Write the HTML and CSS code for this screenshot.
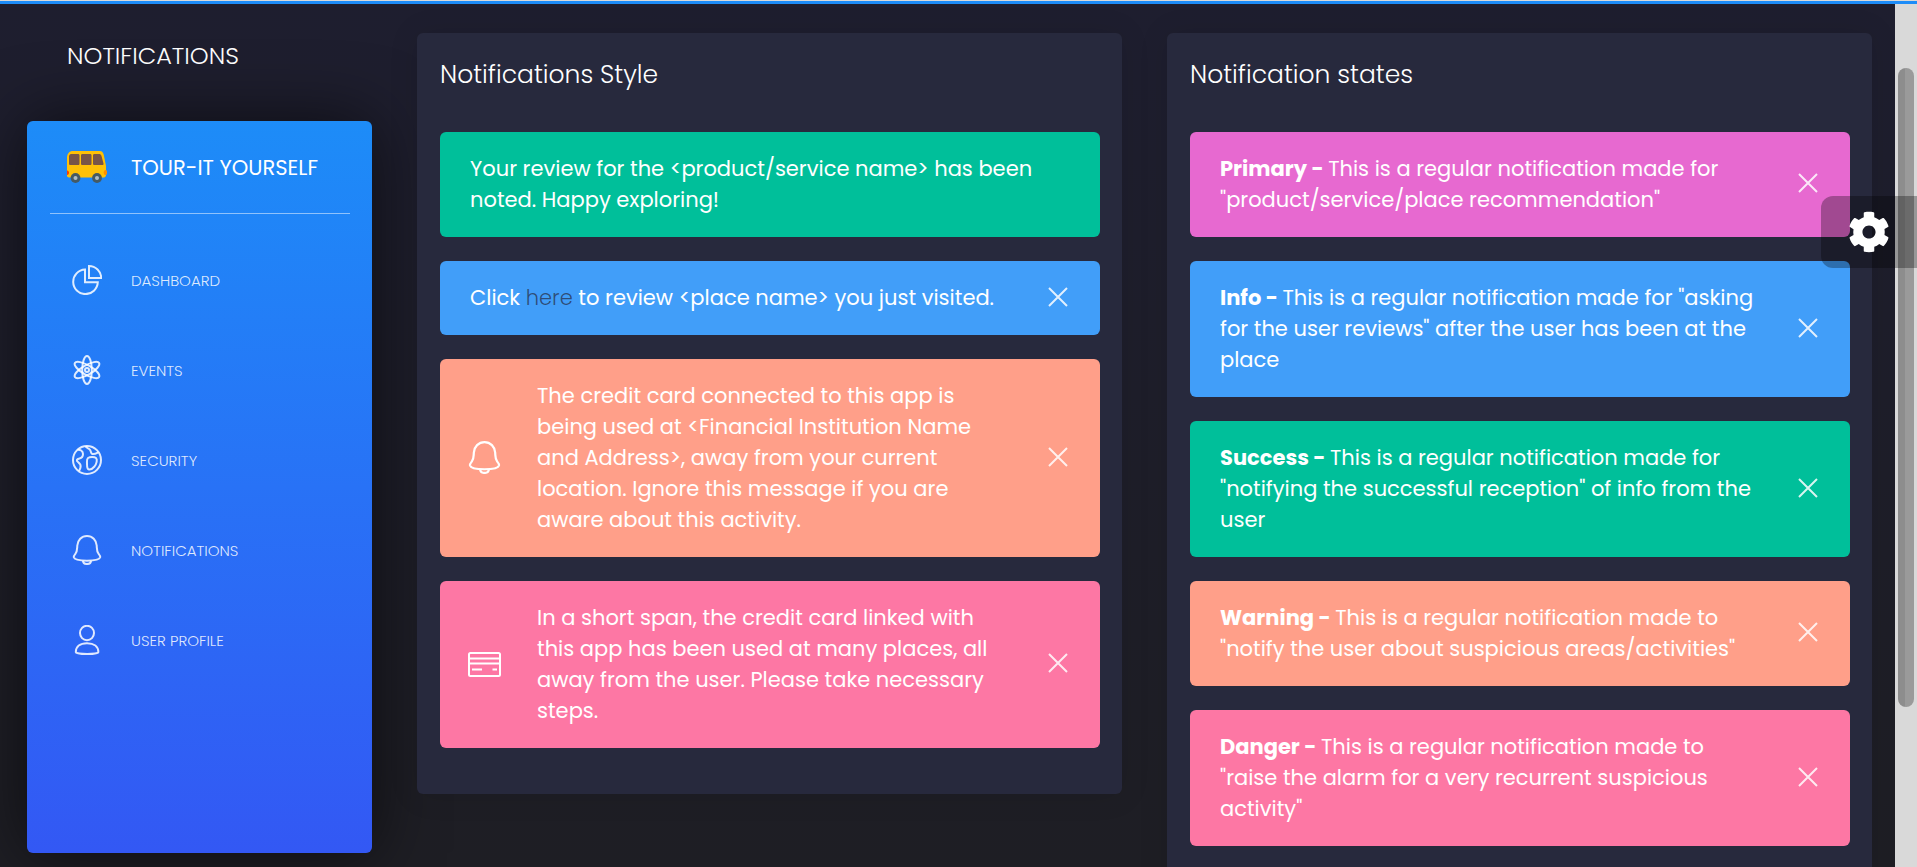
FILE: index.html
```html
<!DOCTYPE html>
<html lang="en">
<head>
<meta charset="utf-8">
<title>Tour-it Yourself - Notifications</title>
<link rel="stylesheet" href="styles.css">
</head>
<body>
<svg class="sprite" aria-hidden="true">
  <symbol id="bell" viewBox="0 0 30 30">
    <path d="M15 1C9.500 1 5.700 5.200 5.300 10.500C5 15 5.300 16.500 3.500 18.600C2.200 20.200 1.500 21 1.800 22.300C2.400 24.400 8 25.700 15 25.700S27.600 24.400 28.200 22.300C28.500 21 27.800 20.200 26.500 18.600C24.700 16.500 25 15 24.700 10.500C24.300 5.200 20.500 1 15 1Z"/>
    <path d="M11 25.800c.4 4.300 7.600 4.300 8 0"/>
  </symbol>
  <symbol id="cross" viewBox="0 0 20 20"><path d="M1 1l18 18M19 1l-18 18"/></symbol>
</svg>
<div class="topline"></div>
<div class="app">
  <div class="left">
    <h1 class="page-title">NOTIFICATIONS</h1>
    <nav class="sidebar" aria-label="Main">
      <a class="brand" href="#">
        <svg class="bus" viewBox="0 0 40 32" aria-hidden="true">
          <path fill="#ffc107" d="M5 0h28c2 0 3 1.500 3.800 4L39 15v9c0 1.500-1 2.500-2 2.500H2C.8 26.500 0 25.500 0 24.500V6C0 4 2 0 5 0z"/>
          <path fill="#795548" d="M4 3h7c1 0 1.500.5 1.500 1.500v8c0 1-.5 1.500-1.500 1.500H3.500c-1 0-1.500-.5-1.500-1.500V5.500C2 4 3 3 4 3zM15.500 3h7.500c1 0 1.500.5 1.500 1.500v8c0 1-.5 1.500-1.500 1.500h-7.500c-1 0-1.500-.5-1.500-1.500v-8c0-1 .5-1.500 1.500-1.500zM27.500 3H32c1.200 0 2 .6 2.500 2l2 7.500c.2 1-.3 1.500-1.500 1.500h-7.500c-1 0-1.500-.5-1.500-1.500v-8c0-1 .5-1.500 1.500-1.500z"/>
          <path fill="#ff3d00" d="M0 19.500c2.700 0 2.700 4.500 0 4.500z"/>
          <ellipse fill="#ff8f00" cx="38.500" cy="21.500" rx="1.800" ry="2.500"/>
          <circle fill="#455a64" cx="8.500" cy="27" r="4.900"/><circle fill="#b0bec5" cx="8.500" cy="27" r="2"/>
          <circle fill="#455a64" cx="30" cy="27" r="4.900"/><circle fill="#b0bec5" cx="30" cy="27" r="2"/>
        </svg>
        <span>TOUR-IT YOURSELF</span>
      </a>
      <ul class="menu">
        <li><a href="#">
          <svg viewBox="0 0 30 30" aria-hidden="true"><path d="M13 4.500A12.300 12.300 0 1 0 25.800 17.300H13z"/><path d="M17 1v12h12.200A12.200 12.200 0 0 0 17 1z"/></svg>
          <span>DASHBOARD</span></a></li>
        <li><a href="#">
          <svg viewBox="0 0 30 30" aria-hidden="true"><ellipse cx="15" cy="15" rx="4.800" ry="14"/><ellipse cx="15" cy="15" rx="4.800" ry="14" transform="rotate(60 15 15)"/><ellipse cx="15" cy="15" rx="4.800" ry="14" transform="rotate(120 15 15)"/><circle cx="15" cy="15" r="2"/></svg>
          <span>EVENTS</span></a></li>
        <li><a href="#">
          <svg viewBox="0 0 30 30" aria-hidden="true"><circle cx="15" cy="15" r="14"/><path d="M5.500 4.800C8 4.200 11 6 11 9c0 2.500-1 4-3.500 4.500-3 .7-3.500 2-1.500 3.500 2.200 1.600 3.200 3 2.500 5.500-.4 1.400-1 2.500-1.500 3.700"/><path d="M13.500 1.300c1 1.500 3 2.200 4.200 3.200 1.300 1 .8 3 2.300 4.300 1.200.8 3 .2 6.300-1.500"/><path d="M16 13c2-1.300 6.500-1.200 8 0 1.700 1.500.5 6-1.500 8.500-1.700 2-3.700 3.200-5.500 3-2-.3-2-2.700-2-5.500S14.500 14.200 16 13z"/></svg>
          <span>SECURITY</span></a></li>
        <li><a href="#">
          <svg aria-hidden="true"><use href="#bell"/></svg>
          <span>NOTIFICATIONS</span></a></li>
        <li><a href="#">
          <svg viewBox="0 0 30 30" aria-hidden="true"><ellipse cx="15" cy="8" rx="7" ry="7.200"/><path d="M15 18.200c-7 0-11.200 3.300-11.200 9 0 2.400 22.600 2.400 22.600 0 0-5.700-4.400-9-11.400-9z"/></svg>
          <span>USER PROFILE</span></a></li>
      </ul>
    </nav>
  </div>
  <main class="cards">
    <section class="card">
      <h2>Notifications Style</h2>
      <div class="alert success"><p>Your review for the &lt;product/service name&gt; has been<br>noted. Happy exploring!</p></div>
      <div class="alert info"><p>Click <a href="#">here</a> to review &lt;place name&gt; you just visited.</p>
        <button type="button" class="close" aria-label="Close"><svg><use href="#cross"/></svg></button></div>
      <div class="alert with-icon warning"><svg class="icon" aria-hidden="true"><use href="#bell"/></svg>
        <p>The credit card connected to this app is<br>being used at &lt;Financial Institution Name<br>and Address&gt;, away from your current<br>location. Ignore this message if you are<br>aware about this activity.</p>
        <button type="button" class="close" aria-label="Close"><svg><use href="#cross"/></svg></button></div>
      <div class="alert with-icon danger"><svg class="icon" viewBox="0 0 33 33" aria-hidden="true"><rect x="1" y="5" width="31" height="23" rx="1.500"/><path d="M1 10.500h31M1 15.500h31M4 21.500h10M24.500 21.500h4.500"/></svg>
        <p>In a short span, the credit card linked with<br>this app has been used at many places, all<br>away from the user. Please take necessary<br>steps.</p>
        <button type="button" class="close" aria-label="Close"><svg><use href="#cross"/></svg></button></div>
    </section>
    <section class="card">
      <h2>Notification states</h2>
      <div class="alert primary"><p><b>Primary - </b>This is a regular notification made for<br>"product/service/place recommendation"</p>
        <button type="button" class="close" aria-label="Close"><svg><use href="#cross"/></svg></button></div>
      <div class="alert info"><p><b>Info - </b>This is a regular notification made for "asking<br>for the user reviews" after the user has been at the<br>place</p>
        <button type="button" class="close" aria-label="Close"><svg><use href="#cross"/></svg></button></div>
      <div class="alert success"><p><b>Success - </b>This is a regular notification made for<br>"notifying the successful reception" of info from the<br>user</p>
        <button type="button" class="close" aria-label="Close"><svg><use href="#cross"/></svg></button></div>
      <div class="alert warning"><p><b>Warning - </b>This is a regular notification made to<br>"notify the user about suspicious areas/activities"</p>
        <button type="button" class="close" aria-label="Close"><svg><use href="#cross"/></svg></button></div>
      <div class="alert danger"><p><b>Danger - </b>This is a regular notification made to<br>"raise the alarm for a very recurrent suspicious<br>activity"</p>
        <button type="button" class="close" aria-label="Close"><svg><use href="#cross"/></svg></button></div>
    </section>
  </main>
  <div class="scroll-track"><div class="scroll-thumb"></div></div>
</div>
<button type="button" class="settings" aria-label="Settings">
  <svg viewBox="0 0 512 512"><path d="M487.400 315.700l-42.600-24.600c4.300-23.200 4.300-47 0-70.200l42.600-24.600c4.900-2.800 7.100-8.600 5.500-14-11.100-35.600-30-67.800-54.700-94.600-3.800-4.100-10-5.100-14.800-2.300L380.800 110c-17.900-15.400-38.500-27.300-60.800-35.100V25.800c0-5.600-3.900-10.500-9.400-11.700-36.700-8.200-74.300-7.800-109.200 0-5.500 1.200-9.400 6.100-9.400 11.700V75c-22.200 7.900-42.800 19.800-60.800 35.100L88.700 85.500c-4.900-2.800-11-1.900-14.800 2.300-24.700 26.700-43.600 58.900-54.700 94.600-1.700 5.400.6 11.200 5.500 14L67.300 221c-4.300 23.200-4.300 47 0 70.200l-42.600 24.600c-4.900 2.800-7.100 8.600-5.500 14 11.100 35.600 30 67.800 54.700 94.600 3.800 4.100 10 5.100 14.800 2.300l42.600-24.600c17.900 15.400 38.500 27.300 60.800 35.100v49.200c0 5.600 3.900 10.500 9.400 11.700 36.700 8.200 74.300 7.800 109.200 0 5.500-1.200 9.400-6.100 9.400-11.700v-49.200c22.200-7.900 42.800-19.800 60.800-35.100l42.600 24.600c4.900 2.800 11 1.900 14.800-2.300 24.700-26.700 43.600-58.900 54.700-94.600 1.500-5.500-.7-11.300-5.600-14.100zM256 336c-44.100 0-80-35.900-80-80s35.900-80 80-80 80 35.900 80 80-35.900 80-80 80z"/></svg>
</button>
</body>
</html>
```

FILE: styles.css
```css
* { box-sizing: border-box; }
body {
  margin: 0;
  height: 100vh;
  overflow: hidden;
  background: linear-gradient(#1e1e2f, #1e1e24);
  color: #fff;
  font-family: Poppins, Inter, "Open Sans", sans-serif;
  font-size: 21px;
  line-height: 31px;
}
h1, h2, p, ul { margin: 0; padding: 0; }
a { color: inherit; text-decoration: none; }
button { border: 0; padding: 0; background: none; cursor: pointer; }
svg { display: block; fill: none; stroke: currentColor; stroke-width: 2; }
.sprite { position: absolute; width: 0; height: 0; }

.topline {
  position: absolute;
  inset: 0 0 auto;
  z-index: 3;
  height: 4px;
  border-top: 1px solid #d9d9d9;
  background: #1d8cf8;
}
.app { display: flex; height: 100vh; }

.left {
  display: flex;
  flex-direction: column;
  flex: none;
  width: 372px;
  padding: 0 0 14px 27px;
}
.page-title {
  height: 121px;
  padding: 40px 0 0 40px;
  font-size: 24px;
  font-weight: 300;
}
.sidebar {
  flex: 1;
  padding: 0 22px 0 23px;
  border-radius: 6px;
  background: linear-gradient(#1d8cf8, #3358f4);
  box-shadow: 0 0 68px rgba(0, 0, 0, 0.6);
}
.brand {
  display: flex;
  align-items: center;
  gap: 24px;
  height: 93px;
  padding-left: 17px;
  border-bottom: 1px solid rgba(255, 255, 255, 0.5);
  font-weight: 400;
}
.bus { width: 40px; height: 32px; stroke: none; }
.menu { padding: 21px 0 0 22px; list-style: none; }
.menu a {
  display: flex;
  align-items: center;
  gap: 29px;
  height: 90px;
  color: rgba(255, 255, 255, 0.85);
  font-size: 15px;
  font-weight: 300;
}
.menu svg { width: 30px; height: 30px; }

.cards {
  display: grid;
  flex: 1;
  grid-template-columns: 1fr 1fr;
  align-items: start;
  gap: 45px;
  padding: 33px 23px 0 45px;
}
.card {
  display: flex;
  flex-direction: column;
  gap: 24px;
  padding: 23px 22px 46px 23px;
  border-radius: 6px;
  background: #27293d;
  box-shadow: 0 1px 30px rgba(0, 0, 0, 0.1);
}
.card h2 {
  height: 52px;
  padding-top: 3px;
  font-size: 25px;
  font-weight: 300;
}
.alert {
  display: flex;
  align-items: center;
  padding: 21px 32px 22px 30px;
  border-radius: 6px;
}
.alert.with-icon { padding-left: 28px; }
.alert p { flex: 1; white-space: nowrap; }
.alert p a { color: rgba(39, 41, 61, 0.7); font-weight: 300; }
.alert b { font-weight: 700; }
.icon { width: 33px; height: 33px; margin-right: 36px; }
.close { padding-bottom: 2px; color: #fff; opacity: 0.85; }
.close svg { width: 20px; height: 20px; }
.primary { background: #e769d0; }
.info { background: #419ef9; }
.success { background: #00bf9a; }
.warning { background: #ff9f89; }
.danger { background: #fd77a4; }

.scroll-track { flex: none; width: 22px; padding: 68px 3px 0; background: #d9d9d9; }
.scroll-thumb {
  height: 80%;
  border-radius: 8px;
  background: linear-gradient(90deg, #8d8d8d 7px, #9a9a9a 7px);
}
.settings {
  position: absolute;
  top: 196px;
  right: 0;
  z-index: 2;
  width: 96px;
  height: 72px;
  padding-left: 27px;
  border-radius: 12px 0 0 12px;
  background: rgba(0, 0, 0, 0.3);
}
.settings svg { width: 42px; height: 42px; fill: #fff; stroke: none; }
```
